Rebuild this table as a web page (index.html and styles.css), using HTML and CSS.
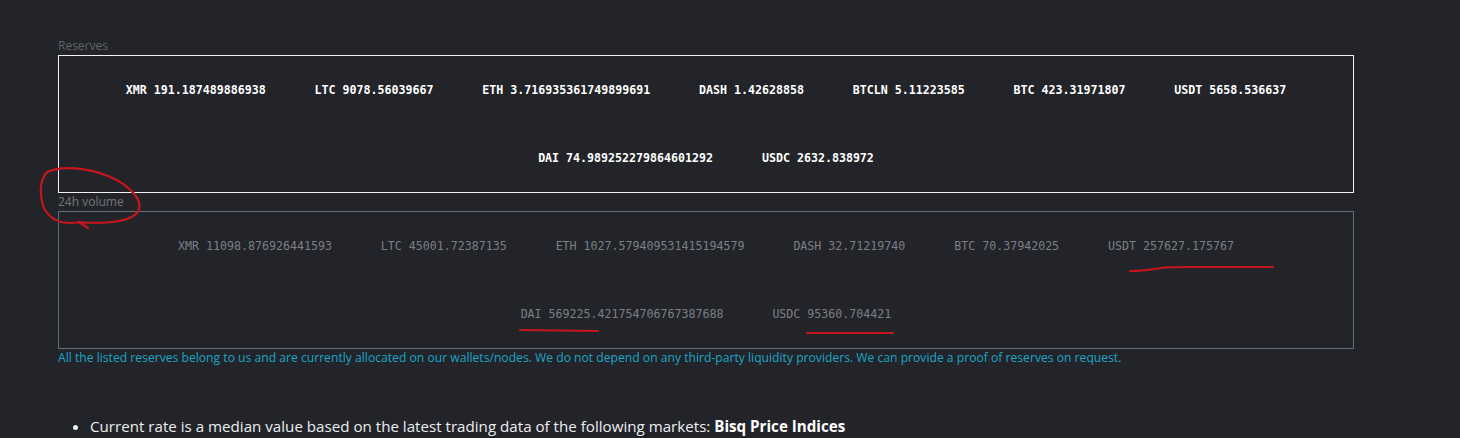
FILE: index.html
```html
<!DOCTYPE html>
<html lang="en">
<head>
<meta charset="utf-8">
<title>Reserves</title>
<link rel="stylesheet" href="styles.css">
</head>
<body>
<main class="page">
  <section class="stats">
    <div class="label">Reserves</div>
    <div class="box box-reserves">
      <span class="item">XMR 191.187489886938</span>
      <span class="item">LTC 9078.56039667</span>
      <span class="item">ETH 3.716935361749899691</span>
      <span class="item">DASH 1.42628858</span>
      <span class="item">BTCLN 5.11223585</span>
      <span class="item">BTC 423.31971807</span>
      <span class="item">USDT 5658.536637</span>
      <span class="item">DAI 74.989252279864601292</span>
      <span class="item">USDC 2632.838972</span>
    </div>
    <div class="label label-volume">24h volume</div>
    <div class="box box-volume">
      <span class="item">XMR 11098.876926441593</span>
      <span class="item">LTC 45001.72387135</span>
      <span class="item">ETH 1027.579409531415194579</span>
      <span class="item">DASH 32.71219740</span>
      <span class="item">BTC 70.37942025</span>
      <span class="item">USDT 257627.175767</span>
      <span class="item">DAI 569225.421754706767387688</span>
      <span class="item">USDC 95360.704421</span>
    </div>
    <p class="note">All the listed reserves belong to us and are currently allocated on our wallets/nodes. We do not depend on any third-party liquidity providers. We can provide a proof of reserves on request.</p>
  </section>
  <ul class="info">
    <li>Current rate is a median value based on the latest trading data of the following markets: <strong>Bisq Price Indices</strong></li>
  </ul>
</main>
<svg class="marks" width="1460" height="438" viewBox="0 0 1460 438" aria-hidden="true">
  <path d="M88 228 C84 225 80 223 78 222 C100 224 128 223 137 213 C146 201 128 184 108 176 C88 168 62 165 47 172 C38 182 40 200 45 210 C52 221 64 225 80 222" />
  <path d="M1130 271 C1140 271 1148 270 1155 269 C1162 267 1175 267 1190 267 L1273 267" />
  <path d="M520 330 L598 331" />
  <path d="M807 333 L893 333" />
</svg>
</body>
</html>
```
FILE: styles.css
```css
html, body {
  margin: 0;
  padding: 0;
}
body {
  position: relative;
  background: #222429;
  color: #e9ecef;
  font-family: "Open Sans", "Noto Sans", sans-serif;
  width: 1460px;
  height: 438px;
  overflow: hidden;
}
.page {
  padding: 37px 0 0 58px;
  width: 1296px;
}
.label {
  font-size: 12px;
  line-height: 18px;
  color: #5f636a;
}
.label-volume {
  color: #72767c;
}
.box {
  display: flex;
  flex-wrap: wrap;
  justify-content: center;
  border: 1px solid #f2f2f2;
  font-family: "DejaVu Sans Mono", "Liberation Mono", monospace;
  font-size: 11.63px;
}
.item {
  padding: 24px 24.4px;
  line-height: 20px;
  white-space: pre;
}
.box-reserves {
  color: #ffffff;
  font-weight: bold;
}
.box-volume {
  border-color: #676b73;
  color: #7b7f85;
}
.note {
  margin: 0;
  font-size: 12.15px;
  line-height: 18px;
  color: #1ba5c6;
}
.info {
  margin: 47px 0 0;
  padding-left: 32px;
  font-size: 15.15px;
  line-height: 24px;
  color: #eceef0;
}
.info strong {
  color: #ffffff;
}
.marks {
  position: absolute;
  left: 0;
  top: 0;
  pointer-events: none;
}
.marks path {
  fill: none;
  stroke: #c4161c;
  stroke-width: 2.2;
  stroke-linecap: round;
  stroke-linejoin: round;
}
```
